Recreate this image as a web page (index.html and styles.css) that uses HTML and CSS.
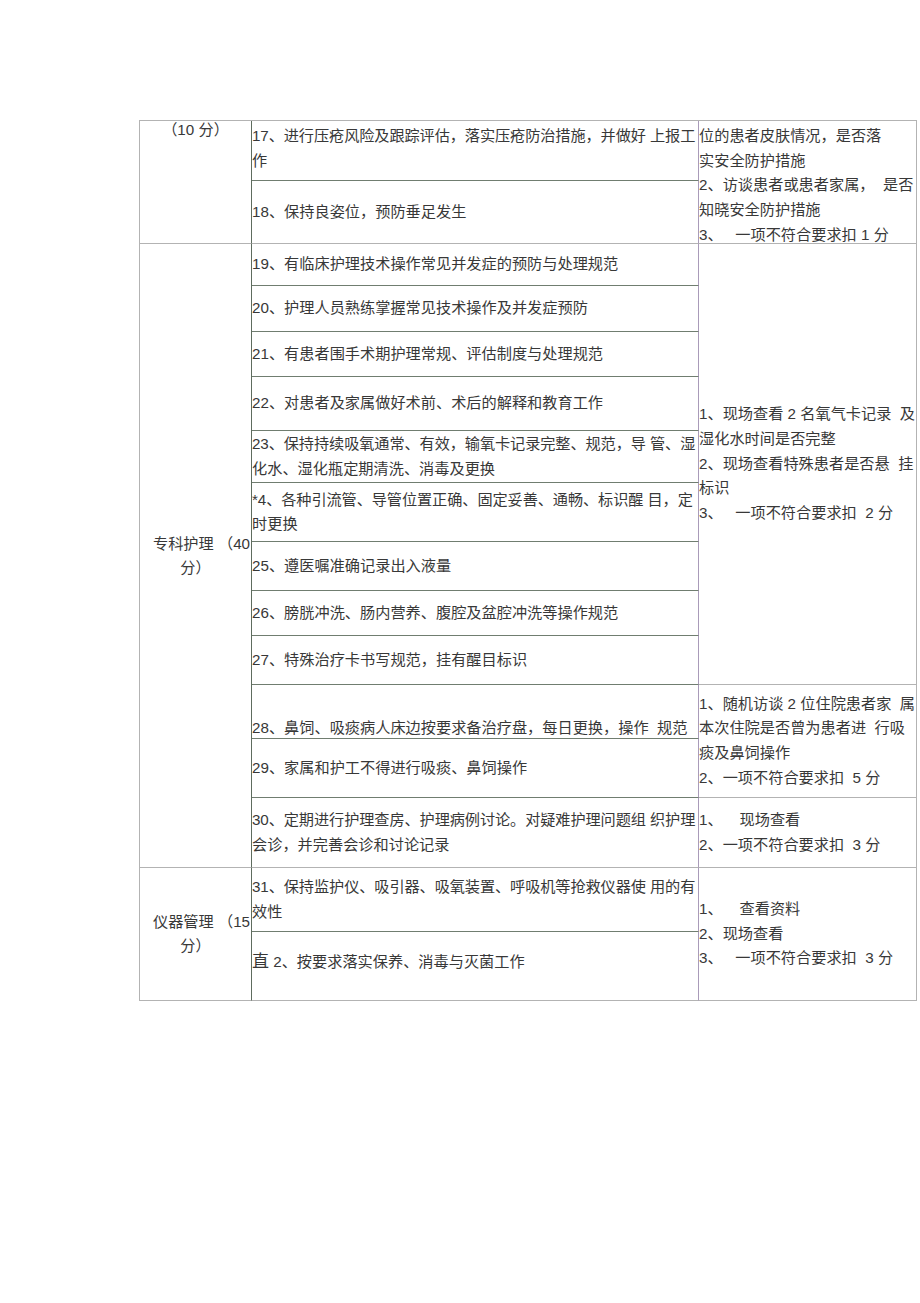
FILE: index.html
```html
<!DOCTYPE html>
<html lang="zh-CN">
<head>
<meta charset="utf-8">
<title>护理质量评分表</title>
<link rel="stylesheet" href="styles.css">
</head>
<body>
<div class="sheet">
  <div class="cell c1 span2 top"><div class="ln">（10 分）</div></div>
  <div class="cell c2 top"><div class="ln tight">17、进行压疮风险及跟踪评估，落实压疮防治措施，并做好 上报工</div><div class="ln">作</div></div>
  <div class="cell c3 span2 top"><div class="ln">位的患者皮肤情况，是否落</div><div class="ln">实安全防护措施</div><div class="ln">2、访谈患者或患者家属，  是否</div><div class="ln">知晓安全防护措施</div><div class="ln">3、   一项不符合要求扣 1 分</div></div>
  <div class="cell c2 end"><div class="ln">18、保持良姿位，预防垂足发生</div></div>

  <div class="cell c1 span12"><div class="ln first">专科护理 （40</div><div class="ln">分）</div></div>
  <div class="cell c2"><div class="ln">19、有临床护理技术操作常见并发症的预防与处理规范</div></div>
  <div class="cell c3 span9"><div class="ln">1、现场查看 2 名氧气卡记录  及</div><div class="ln">湿化水时间是否完整</div><div class="ln">2、现场查看特殊患者是否悬  挂</div><div class="ln">标识</div><div class="ln">3、   一项不符合要求扣  2 分</div></div>
  <div class="cell c2"><div class="ln">20、护理人员熟练掌握常见技术操作及并发症预防</div></div>
  <div class="cell c2"><div class="ln">21、有患者围手术期护理常规、评估制度与处理规范</div></div>
  <div class="cell c2"><div class="ln">22、对患者及家属做好术前、术后的解释和教育工作</div></div>
  <div class="cell c2"><div class="ln tight">23、保持持续吸氧通常、有效，输氧卡记录完整、规范，导 管、湿</div><div class="ln">化水、湿化瓶定期清洗、消毒及更换</div></div>
  <div class="cell c2"><div class="ln tight">*4、各种引流管、导管位置正确、固定妥善、通畅、标识醒 目，定</div><div class="ln">时更换</div></div>
  <div class="cell c2"><div class="ln">25、遵医嘱准确记录出入液量</div></div>
  <div class="cell c2"><div class="ln">26、膀胱冲洗、肠内营养、腹腔及盆腔冲洗等操作规范</div></div>
  <div class="cell c2"><div class="ln">27、特殊治疗卡书写规范，挂有醒目标识</div></div>
  <div class="cell c2 bottom"><div class="ln">28、鼻饲、吸痰病人床边按要求备治疗盘，每日更换，操作  规范</div></div>
  <div class="cell c3 span2"><div class="ln">1、随机访谈 2 位住院患者家  属</div><div class="ln">本次住院是否曾为患者进  行吸</div><div class="ln">痰及鼻饲操作</div><div class="ln">2、一项不符合要求扣  5 分</div></div>
  <div class="cell c2"><div class="ln">29、家属和护工不得进行吸痰、鼻饲操作</div></div>
  <div class="cell c2 end"><div class="ln tight">30、定期进行护理查房、护理病例讨论。对疑难护理问题组 织护理</div><div class="ln">会诊，并完善会诊和讨论记录</div></div>
  <div class="cell c3"><div class="ln">1、    现场查看</div><div class="ln">2、一项不符合要求扣  3 分</div></div>

  <div class="cell c1 span2"><div class="ln first">仪器管理 （15</div><div class="ln">分）</div></div>
  <div class="cell c2"><div class="ln tight">31、保持监护仪、吸引器、吸氧装置、呼吸机等抢救仪器使 用的有</div><div class="ln">效性</div></div>
  <div class="cell c3 span2"><div class="ln">1、    查看资料</div><div class="ln">2、现场查看</div><div class="ln">3、   一项不符合要求扣  3 分</div></div>
  <div class="cell c2 end raise"><div class="ln"><span class="big">直</span> 2、按要求落实保养、消毒与灭菌工作</div></div>
</div>
</body>
</html>
```

FILE: styles.css
```css
* {
  box-sizing: border-box;
}

body {
  margin: 0;
  background: #ffffff;
}

.sheet {
  display: grid;
  grid-template-columns: 112px 447px 218px;
  grid-template-rows: 60px 63px 42px 46px 45px 54px 52px 59px 49px 45px 49px 54px 59px 70px 64px 69px;
  width: 778px;
  margin: 120px 0 0 139px;
  border-top: 1px solid #b3b3b3;
  border-left: 1px solid #b3b3b3;
  font-family: "Liberation Sans", "Noto Sans CJK SC", sans-serif;
  font-size: 15.2px;
  color: #383838;
}

.cell {
  display: flex;
  flex-direction: column;
  justify-content: center;
  min-width: 0;
  overflow: visible;
}

.ln {
  white-space: pre;
}

.tight {
  letter-spacing: -0.1px;
}

.c1 {
  grid-column: 1;
  align-items: center;
  text-align: center;
  border-right: 1px solid #5e6c5e;
  border-bottom: 1px solid #b3b3b3;
  line-height: 24px;
}

.c1.top {
  justify-content: flex-start;
  line-height: 18px;
}

.c1 .first {
  padding-left: 12px;
}

.c2 {
  grid-column: 2;
  border-right: 1px solid #a99bb9;
  border-bottom: 1px solid #707d70;
  line-height: 24.5px;
}

.c2.top {
  justify-content: flex-start;
  padding-top: 3px;
}

.c2.end {
  border-bottom-color: #b3b3b3;
}

.c2.bottom {
  justify-content: flex-end;
  line-height: 20px;
}

.c2.raise {
  padding-bottom: 8px;
}

.c3 {
  grid-column: 3;
  border-right: 1px solid #b3b3b3;
  border-bottom: 1px solid #b3b3b3;
  line-height: 24.7px;
}

.c3.top {
  justify-content: flex-start;
  padding-top: 3px;
}

.span2 {
  grid-row: span 2;
}

.span9 {
  grid-row: span 9;
}

.span12 {
  grid-row: span 12;
}

.big {
  font-size: 17px;
}
```
